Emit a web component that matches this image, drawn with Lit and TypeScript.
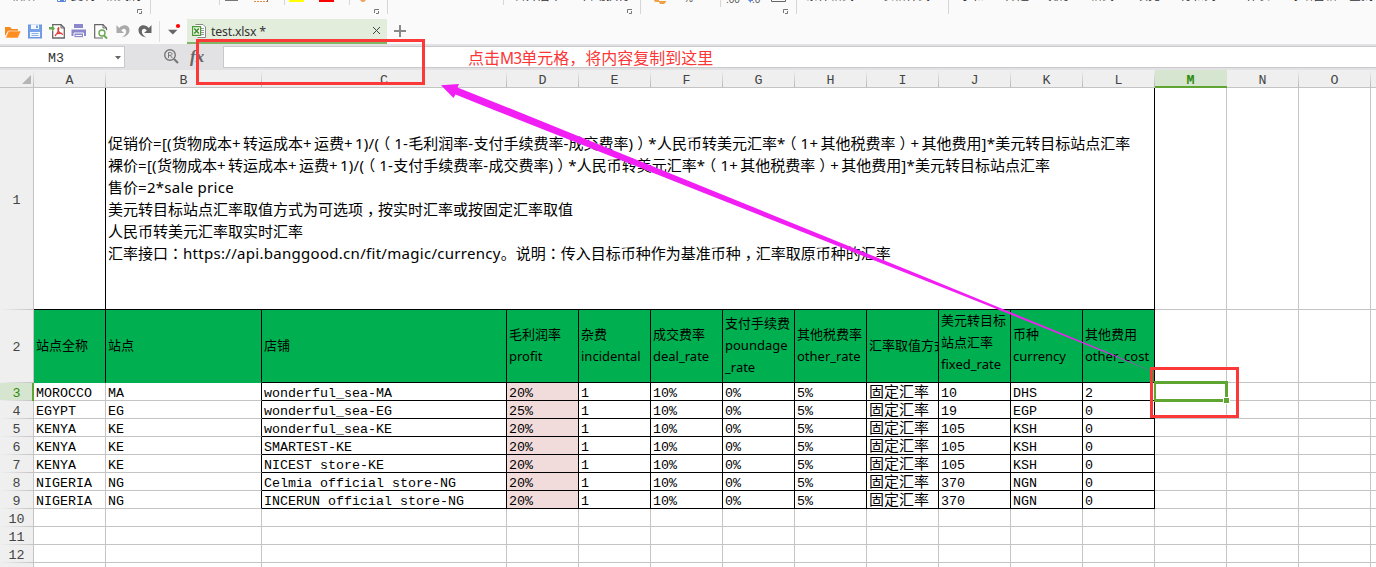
import { LitElement, html, svg, css } from "lit";
import { customElement } from "lit/decorators.js";
import { classMap } from "lit/directives/class-map.js";

const COLS = "ABCDEFGHIJKLMNOP".split("");

const HEADINGS: string[][] = [
  ["站点全称"],
  ["站点"],
  ["店铺"],
  ["毛利润率", "profit"],
  ["杂费", "incidental"],
  ["成交费率", "deal_rate"],
  ["支付手续费", "poundage", "_rate"],
  ["其他税费率", "other_rate"],
  ["汇率取值方式"],
  ["美元转目标", "站点汇率", "fixed_rate"],
  ["币种", "currency"],
  ["其他费用", "other_cost"],
];

const shop = (country: string, code: string, store: string, profit: string, rate: string, cur: string, cost: string) =>
  [country, code, store, profit, "1", "10%", "0%", "5%", "固定汇率", rate, cur, cost];

const DATA: string[][] = [
  shop("MOROCCO", "MA", "wonderful_sea-MA", "20%", "10", "DHS", "2"),
  shop("EGYPT", "EG", "wonderful_sea-EG", "25%", "19", "EGP", "0"),
  shop("KENYA", "KE", "wonderful_sea-KE", "20%", "105", "KSH", "0"),
  shop("KENYA", "KE", "SMARTEST-KE", "20%", "105", "KSH", "0"),
  shop("KENYA", "KE", "NICEST store-KE", "20%", "105", "KSH", "0"),
  shop("NIGERIA", "NG", "Celmia official store-NG", "20%", "370", "NGN", "0"),
  shop("NIGERIA", "NG", "INCERUN official store-NG", "20%", "370", "NGN", "0"),
  [], [], [], [],
];

const NOTES = [
  "促销价=[(货物成本+转运成本+运费+1)/(（1-毛利润率-支付手续费率-成交费率)）*人民币转美元汇率*（1+其他税费率）+其他费用]*美元转目标站点汇率",
  "裸价=[(货物成本+转运成本+运费+1)/(（1-支付手续费率-成交费率)）*人民币转美元汇率*（1+其他税费率）+其他费用]*美元转目标站点汇率",
  "售价=2*sale price",
  "美元转目标站点汇率取值方式为可选项，按实时汇率或按固定汇率取值",
  "人民币转美元汇率取实时汇率",
  "汇率接口：https://api.banggood.cn/fit/magic/currency。说明：传入目标币种作为基准币种，汇率取原币种的汇率",
];

/* Latin runs are tracked slightly wider; full-width punctuation sits mid-cell. */
const MARK: Record<string, string> = { "+": "plus", "：": "colon", "，": "after", "）": "after", "（": "before" };
const tracked = (line: string) =>
  line.split(/([\x20-\x2a\x2c-\x7e]+|[+：，（）])/).map((part) =>
    MARK[part] ? html`<span class=${MARK[part]}>${part}</span>`
      : /^[\x20-\x7e]+$/.test(part) ? html`<span class="latin">${part}</span>`
      : part);

@customElement("ribbon-edge")
class RibbonEdge extends LitElement {
  static styles = css`
    :host { display: block; height: 14px; overflow: hidden; }
    svg { display: block; }
    .label { font: 12px "Noto Sans CJK SC", sans-serif; fill: #333; }
    .num { font: 10px "Liberation Sans", sans-serif; fill: #555; }
  `;
  render() {
    const labels: [number, string][] = [
      [11, "粘贴"], [71, "复制"], [105, "格式刷"], [514, "合并居中"], [582, "自动换行"], [806, "条件格式"],
      [882, "表格样式"], [960, "求和"], [1005, "筛选"], [1048, "排序"], [1090, "格式"],
      [1136, "填充"], [1180, "行和列"], [1234, "工作表"], [1289, "冻结窗格"], [1349, "查找"],
    ];
    const seps = [[150, 14], [219, 5], [284, 5], [349, 5], [387, 14], [503, 5], [640, 14], [720, 7], [796, 14], [948, 14]];
    return html`<svg width="1376" height="14">
      ${labels.map(([x, t]) => svg`<text class="label" x=${x} y="-0.4">${t}</text>`)}
      ${seps.map(([x, h]) => svg`<rect x=${x} y="0" width="1" height=${h} fill="#d6d6d6"/>`)}
      ${[137, 374, 627, 783].map((x) => svg`<path d="M${x + 0.5} 13V9.500H${x + 5}M${x + 4.5} 11V13.500H${x + 2}" fill="none" stroke="#777"/>`)}
      <path d="M57.500 0v1.500h8V0M60 .5h4" fill="none" stroke="#5b86dd"/>
      <rect x="225" y="0" width="13" height="1" fill="#777"/>
      <path d="M254 1.500h14" stroke="#e98b3a" stroke-dasharray="2 1"/><path d="M267.500 0v2" stroke="#777"/>
      <rect x="289" y="0" width="15" height="2" fill="#ff0"/>
      <rect x="319" y="0" width="15" height="2" fill="red"/>
      <path d="M360 0h6l-2 2h-2z" fill="#efa35e"/>
      <path d="M654 0h5v2h-4zM659 1h7v1l-2 2h-4l-1 -2z" fill="#f0a040"/>
      <text class="num" x="684" y="1.500">%</text>
      <text class="num" x="726" y="2.500">.00</text>
      <path d="M748 0h5v1h-2v2z" fill="#5b86dd"/><text class="num" x="752" y="2.500">.0</text>
      <path d="M771.500 0v1.500h14V0" fill="none" stroke="#666"/>
    </svg>`;
  }
}

@customElement("quick-bar")
class QuickBar extends LitElement {
  static styles = css`
    :host { display: flex; height: 30px; }
    svg { display: block; flex: none; }
    .tab {
      box-sizing: border-box; width: 200px; height: 25px; margin-top: 5px; padding: 0 6px 0 5px;
      display: flex; align-items: center; background: #e2eedb; border-bottom: 2px solid #82b567;
      font: 12.3px "Noto Sans", sans-serif; color: #333;
    }
    .name { flex: 1; padding: 1px 0 0 5px; letter-spacing: -0.2px; }
    .add { margin: 11px 0 0 7px; }
  `;
  render() {
    return html`
      <svg width="187" height="30" viewBox="0 14 187 30">
        <g fill="#f58a1f"><path d="M5 27h5l2 2h6v2H8l-3 5z"/><path d="M8.500 31H21l-3 7H5.500z" fill="#ff8d20" stroke="#fafafa" stroke-width=".6"/></g>
        <path d="M28.700 25.200h12.600v12.600H28.700z" fill="#79a3ea" stroke="#6d97e0" stroke-width="1.4"/>
        <path d="M31 24.500h8v4.500h-8zM30 32h10v5H30z" fill="#f5f8ff"/><path d="M36 25.500h2V28h-2z" fill="#79a3ea"/><path d="M31.500 33.500h7M31.500 35.500h7" stroke="#8eb0e8"/>
        <path d="M52.700 27v-2.300H61l3.300 3.300v10H52.700v-7.500" fill="#fff" stroke="#666" stroke-width="1.300"/>
        <path d="M61 24.500V28h3.500" fill="none" stroke="#666"/>
        <path d="M49 27h3v-1.800l3 3.300l-3 3.300V29.500h-3z" fill="#6aa84f"/>
        <path d="M58 27.500c2 0 0 5.500-3 8.500M58 28c-1 3 2 5.500 5 6.500M55.500 34.500c2-1.500 4-1.500 7-1" fill="none" stroke="#e0403c" stroke-width="1.300"/>
        <path d="M74 24h9v4h-9zM71.500 29.500h14.500V36H71.500z" fill="#8a87cc"/><path d="M74 33h9.500v4.700H74z" fill="#8a87cc" stroke="#fafafa"/><path d="M75.500 35.500h6.500" stroke="#fafafa"/>
        <path d="M103 38H94.700V24.700H103l3.500 3.500v2" fill="#fff" stroke="#666" stroke-width="1.200"/><path d="M103 24.500V28h3.500" fill="none" stroke="#666"/>
        <circle cx="102" cy="33" r="3" fill="#fff" stroke="#6aa84f" stroke-width="1.400"/><path d="M104 35.500l3 3" stroke="#6aa84f" stroke-width="1.800"/>
        <path d="M116.500 25v8h7.500l-2.800-2.600c2-2.600 5-2 5 1.300c0 2.300-1.800 4-4.500 5.800c5-1 7.800-3.800 7.800-7.300c0-5.200-6.500-6.700-10.300-2.300z" fill="#aaa"/>
        <path d="M151.500 25v8H144l2.800-2.600c-2-2.600-5-2-5 1.300c0 2.300 1.800 4 4.500 5.800c-5-1-7.800-3.800-7.800-7.300c0-5.200 6.500-6.700 10.300-2.300z" fill="#666"/>
        <path d="M159.500 21v21" stroke="#ddd"/>
        <path d="M168 29.800h9.500l-4.700 4.700z" fill="#666"/><circle cx="178" cy="26" r="2.100" fill="red"/>
      </svg>
      <div class="tab">
        <svg width="14" height="14" viewBox="0 0 14 14">
          <path d="M3.500.5H11L13.500 3v10.500H5.500" fill="#fff" stroke="#888"/><path d="M9 4.500h3M9 6.500h3M9 8.500h3M9 10.500h3" stroke="#999"/>
          <path d="M.6 2.600h8v8.800h-8z" fill="#f4faf1" stroke="#4b9a37" stroke-width="1.200"/><path d="M2.300 4.500l4.500 5M6.800 4.500l-4.500 5" stroke="#3d8d2a" stroke-width="1.500"/>
        </svg>
        <span class="name">test.xlsx *</span>
        <svg width="9" height="9" viewBox="0 0 9 9"><path d="M1 1l7 7M8 1L1 8" stroke="#444"/></svg>
      </div>
      <svg class="add" width="12" height="12"><path d="M6 0v12M0 6h12" stroke="#888" stroke-width="2"/></svg>
    `;
  }
}

@customElement("formula-bar")
class FormulaBar extends LitElement {
  static styles = css`
    :host { display: flex; box-sizing: border-box; height: 26px; padding: 2px 0; background: #e2e2e4; }
    .ref, .input { box-sizing: border-box; height: 22px; background: #fff; border: solid #c9c9cb; border-width: 1px 0; display: flex; align-items: center; }
    .ref { width: 125px; border-right-width: 1px; padding: 2px 3px 0 48px; justify-content: space-between; font: 13.33px "Liberation Mono", monospace; color: #333; }
    .tools { width: 98px; }
    .input { flex: 1; border-left-width: 1px; padding-left: 244px; font: 16px/18px "Noto Sans CJK SC", sans-serif; color: #fb3636; white-space: nowrap; }
    .id { font: 15.500px/18px "Noto Sans", sans-serif; letter-spacing: -0.900px; }
    svg { display: block; }
  `;
  render() {
    return html`
      <div class="ref"><span>M3</span><svg width="6" height="4"><path d="M0 0h6L3 3.500z" fill="#666"/></svg></div>
      <svg class="tools" width="98" height="22" viewBox="125 46 98 22">
        <circle cx="170" cy="55" r="5.300" fill="none" stroke="#777" stroke-width="1.400"/>
        <path d="M174 59l4 4" stroke="#777" stroke-width="2.200"/>
        <path d="M168.500 58v-5.500h2c2 0 2 2.800 0 2.800h-2M170.300 55.300l2 2.700" fill="none" stroke="#777"/>
        <text x="190" y="62" font-family="Liberation Serif, serif" font-style="italic" font-weight="bold" font-size="17" fill="#666">fx</text>
      </svg>
      <div class="input"><span>点击<span class="id">M3</span>单元格，将内容复制到这里</span></div>
    `;
  }
}

@customElement("sheet-grid")
class SheetGrid extends LitElement {
  static styles = css`
    :host { display: block; overflow: hidden; font: 13.33px/14px "Liberation Mono", "Noto Sans CJK SC", monospace; color: #000; }
    .row { display: grid; grid-template-columns: 34px 72px 156px 245px repeat(13, 72px); height: 18px; }
    .row.top { height: 18px; background: #efefef; }
    .row.note { height: 222px; }
    .row.head { height: 73px; }
    .row > div { box-sizing: border-box; border: 0 solid #c4c4c4; border-width: 0 1px 1px 0; overflow: hidden; white-space: nowrap; min-width: 0; }
    .row > .col { color: #444; display: flex; justify-content: center; padding: 4px 1px 0 0; border-right-width: 0;
      background: linear-gradient(#efefef, #b8b8b8) right / 1px 100% no-repeat; }
    .row > .col.on { background: #d5e5cf; color: #2f8a08; font-weight: bold; border-bottom: 2px solid #5ea532; }
    .row > .corner { display: flex; justify-content: flex-end; align-items: flex-end; padding: 0 3px 3px 0; border-right-width: 0;
      background: linear-gradient(#efefef, #b8b8b8) right / 1px 100% no-repeat; }
    .row > .num { background: linear-gradient(90deg, #efefef, #c4c4c4) bottom / 100% 1px no-repeat #efefef; border-bottom-width: 0;
      color: #444; display: flex; align-items: center; justify-content: center; padding-top: 3px; }
    .row > .num.on { background-color: #d5e5cf; color: #2f8a08; border-right: 2px solid #5ea532; padding-left: 1px; }
    .row > .cell { padding: 4px 0 0 2px; line-height: 13px; }
    .row > .right { border-right-color: #000; }
    .row > .bottom { border-bottom-color: #000; }
    .row > .pink { background: #f2dcdb; }
    .row > .cjk { font: 15px/16px "Noto Sans CJK SC", sans-serif; padding: 0 0 0 2px; }
    .row > .merged { grid-column: 3 / 14; display: flex; flex-direction: column; justify-content: center; padding: 0 0 1px 2px;
      font: 15px/22px "Noto Sans", "Noto Sans CJK SC", sans-serif; text-spacing-trim: space-all; }
    .latin { letter-spacing: 0.290px; }
    .plus { letter-spacing: 2.400px; }
    .colon { font-family: "Noto Sans CJK TC", sans-serif; }
    .after { position: relative; left: 4px; }
    .before { position: relative; left: -4px; }
    .row > .title { background: #00b050; display: flex; flex-direction: column; justify-content: center; padding: 0 0 3px 2px;
      font: 13px/22px "Noto Sans", "Noto Sans CJK SC", sans-serif; }
    .row > .green { border-bottom-color: #00b050; }
    .row > .raised { padding-bottom: 9px; }
  `;
  render() {
    return html`
      <div class="row top">
        <div class="corner"><svg width="9" height="9"><path d="M9 0v9H0z" fill="#b5b5b5"/></svg></div>
        ${COLS.map((c) => html`<div class=${classMap({ col: true, on: c === "M" })}>${c}</div>`)}
      </div>
      <div class="row note">
        <div class="num">1</div>
        <div class="right bottom"></div>
        <div class="merged right bottom">${NOTES.map((n) => html`<div>${tracked(n)}</div>`)}</div>
        <div></div><div></div><div></div><div></div>
      </div>
      <div class="row head">
        <div class="num">2</div>
        ${HEADINGS.map((h, i) => html`<div class=${classMap({ title: true, right: true, bottom: i > 1, green: i < 2, raised: i === 9 })}>${h.map((t) => html`<span>${t}</span>`)}</div>`)}
        <div></div><div></div><div></div><div></div>
      </div>
      ${DATA.map((r, n) => html`<div class="row">
        <div class=${classMap({ num: true, on: n === 0 })}>${n + 3}</div>
        ${COLS.map((_, i) => {
          const framed = r.length > 0 && i < 12;
          return html`<div class=${classMap({ cell: true, right: framed && i > 0, bottom: framed && i > 1, pink: framed && i === 3, cjk: i === 8 })}>${r[i] ?? ""}</div>`;
        })}
      </div>`)}
    `;
  }
}

@customElement("app-root")
class AppRoot extends LitElement {
  static styles = css`
    :host { display: block; position: relative; width: 1376px; height: 567px; overflow: hidden; background: #fff; }
    .chrome { background: #fafafa; }
    .marks { position: absolute; inset: 0; pointer-events: none; }
  `;
  render() {
    return html`
      <div class="chrome"><ribbon-edge></ribbon-edge><quick-bar></quick-bar></div>
      <formula-bar></formula-bar>
      <sheet-grid></sheet-grid>
      <svg class="marks" width="1376" height="567">
        <path d="M1154 381h74v16h-3v-13h-69v15h67v3h-69z" fill="#5ea532"/>
        <rect x="1223" y="397" width="7" height="7" fill="#fff"/>
        <rect x="1224" y="398" width="5" height="5" fill="#5ea532"/>
        <path d="M441 85.300L459 84L457.500 87.500L514 110L920 275L1100 349L1160 374.800L1100 350.300L920 278.500L494 110L455.500 94.500L453.500 98z" fill="#f21ff5"/>
        <rect x="197.500" y="40.500" width="226" height="43" fill="none" stroke="#fc3838" stroke-width="3"/>
        <rect x="1151.500" y="368.500" width="86" height="48" fill="none" stroke="#fc3838" stroke-width="3"/>
      </svg>
    `;
  }
}
